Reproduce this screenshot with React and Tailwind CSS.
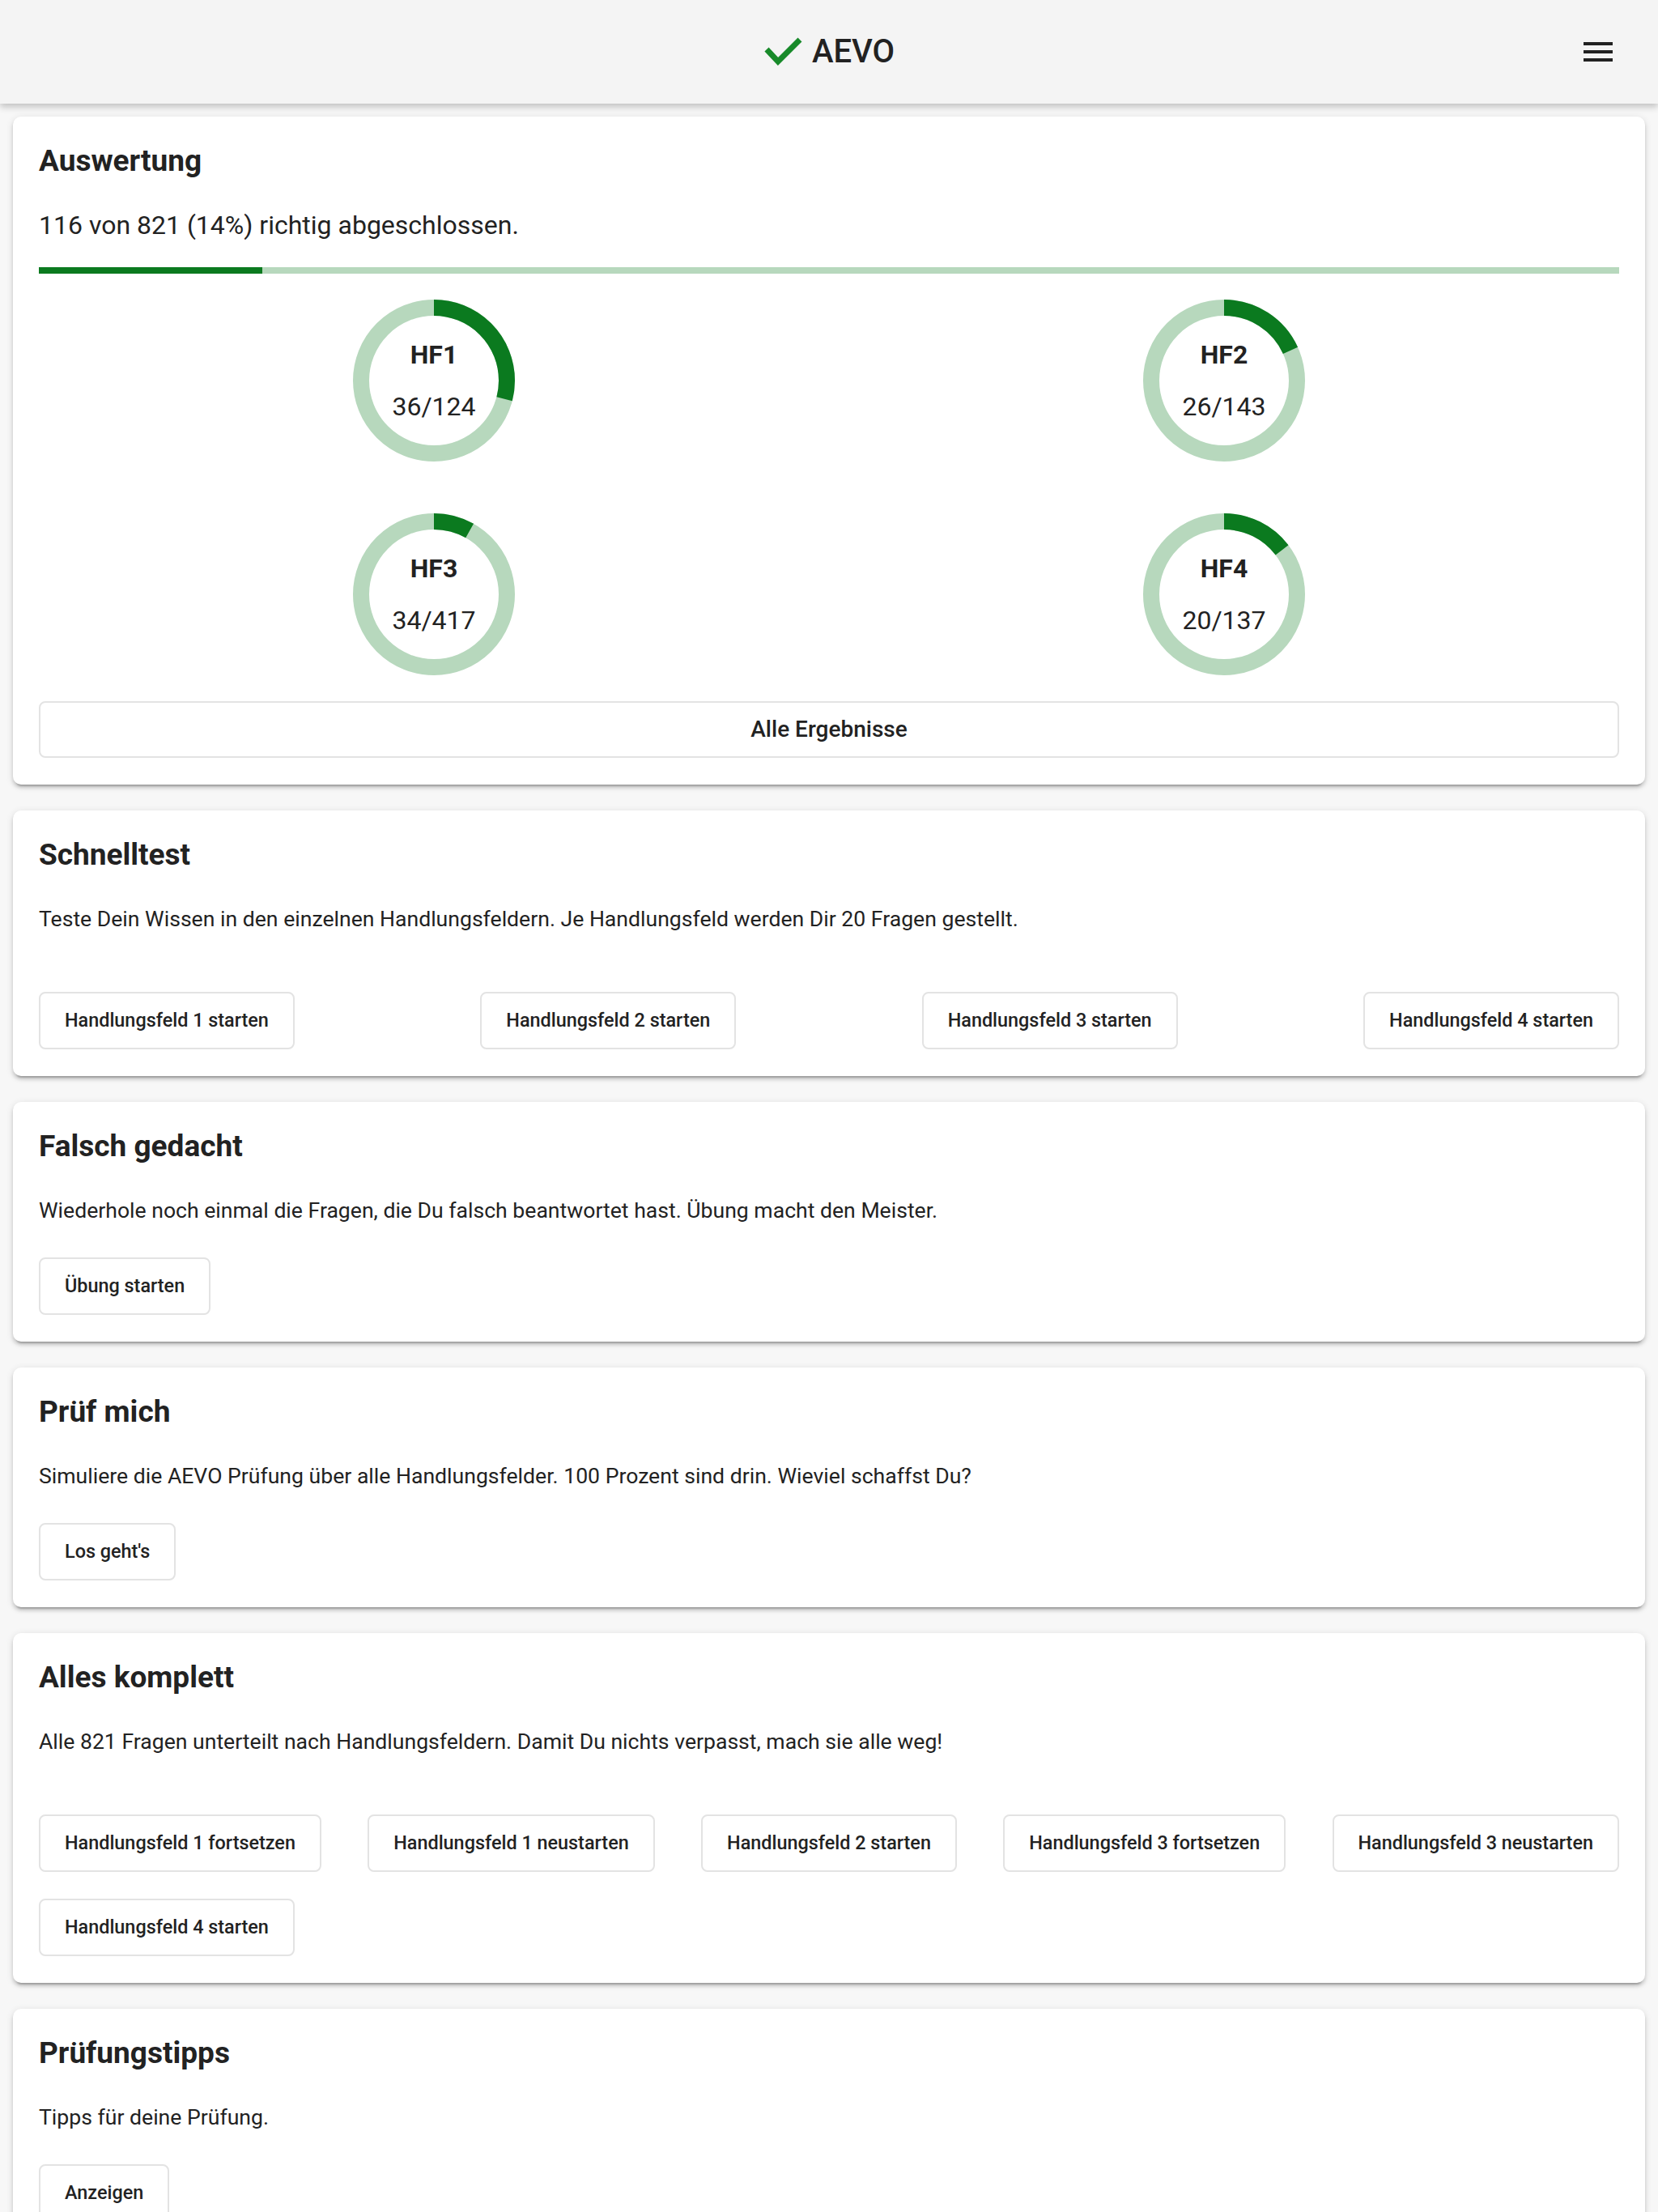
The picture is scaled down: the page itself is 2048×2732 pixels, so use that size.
import React from "react";

const fields = [
  { name: "HF1", done: 36, total: 124 },
  { name: "HF2", done: 26, total: 143 },
  { name: "HF3", done: 34, total: 417 },
  { name: "HF4", done: 20, total: 137 },
];

const cardCls =
  "mx-4 rounded-[10px] bg-white px-8 pt-8 pb-[33px] shadow-[0_4px_4px_rgba(0,0,0,0.14),0_6px_2px_-4px_rgba(0,0,0,0.2),0_2px_10px_rgba(0,0,0,0.12)]";

function Btn({ children }) {
  return (
    <button className="h-[71px] rounded-lg border-2 border-[#e3e3e3] bg-white px-[30px] text-[23.4px] font-medium text-[#222]">
      {children}
    </button>
  );
}

function Donut({ name, done, total }) {
  const r = 90;
  const c = 2 * Math.PI * r;
  const len = (done / total) * c;
  return (
    <div className="flex justify-center py-8">
      <div className="relative h-[200px] w-[200px]">
        <svg width="200" height="200" viewBox="0 0 200 200" className="absolute inset-0 -rotate-90">
          <circle cx="100" cy="100" r={r} fill="none" stroke="#b7d8bd" strokeWidth="20" />
          <circle cx="100" cy="100" r={r} fill="none" stroke="#0b7a1f" strokeWidth="20" strokeDasharray={`${len} ${c}`} />
        </svg>
        <div className="absolute inset-0 flex flex-col items-center justify-center text-[32px] leading-[64px] text-[#222]">
          <span className="font-bold">{name}</span>
          <span>{done}/{total}</span>
        </div>
      </div>
    </div>
  );
}

function Card({ title, text, children, wrap }) {
  return (
    <section className={cardCls}>
      <h2 className="text-[37px] font-bold leading-[46px] text-[#222]">{title}</h2>
      <p className="mt-9 text-[26.6px] leading-[40px] text-[#222]">{text}</p>
      {wrap ? (
        <div className="mt-[70px] flex flex-wrap justify-between gap-y-[33px]">{children}</div>
      ) : (
        <div className="mt-[38px] flex">{children}</div>
      )}
    </section>
  );
}

export default function App() {
  return (
    <div className="min-h-screen bg-[#f7f7f7] font-['Roboto',sans-serif]">
      <header className="relative z-10 grid h-[128px] grid-cols-[1fr_auto_1fr] items-center bg-[#f4f4f4] shadow-[0_4px_8px_rgba(0,0,0,0.22)]">
        <div />
        <div className="flex items-center">
          <svg width="50" height="36" viewBox="0 0 50 36">
            <polyline points="4,15 18,30 45,3" fill="none" stroke="#188a2a" strokeWidth="7" />
          </svg>
          <span className="ml-[10px] text-[40px] font-medium text-[#222]">AEVO</span>
        </div>
        <div className="flex justify-end pr-[50px]">
          <svg width="48" height="48" viewBox="0 0 24 24">
            <path fill="#222" d="M3 18h18v-2H3v2zm0-5h18v-2H3v2zm0-7v2h18V6H3z" />
          </svg>
        </div>
      </header>

      <main className="flex flex-col gap-8 pt-4 pb-8">
        <section className={cardCls}>
          <h2 className="text-[37px] font-bold leading-[46px] text-[#222]">Auswertung</h2>
          <p className="mt-9 text-[32px] leading-[40px] text-[#222]">116 von 821 (14%) richtig abgeschlossen.</p>
          <div className="mt-8 h-2 w-full bg-[#b7d8bd]">
            <div className="h-2 bg-[#0b7a1f]" style={{ width: `${(116 / 821) * 100}%` }} />
          </div>
          <div className="grid grid-cols-2">
            {fields.map((f) => (
              <Donut key={f.name} {...f} />
            ))}
          </div>
          <button className="h-[70px] w-full rounded-lg border-2 border-[#e3e3e3] bg-white text-[28px] font-medium text-[#222]">
            Alle Ergebnisse
          </button>
        </section>

        <Card
          wrap
          title="Schnelltest"
          text="Teste Dein Wissen in den einzelnen Handlungsfeldern. Je Handlungsfeld werden Dir 20 Fragen gestellt."
        >
          <Btn>Handlungsfeld 1 starten</Btn>
          <Btn>Handlungsfeld 2 starten</Btn>
          <Btn>Handlungsfeld 3 starten</Btn>
          <Btn>Handlungsfeld 4 starten</Btn>
        </Card>

        <Card
          title="Falsch gedacht"
          text="Wiederhole noch einmal die Fragen, die Du falsch beantwortet hast. Übung macht den Meister."
        >
          <Btn>Übung starten</Btn>
        </Card>

        <Card
          title="Prüf mich"
          text="Simuliere die AEVO Prüfung über alle Handlungsfelder. 100 Prozent sind drin. Wieviel schaffst Du?"
        >
          <Btn>Los geht's</Btn>
        </Card>

        <Card
          wrap
          title="Alles komplett"
          text="Alle 821 Fragen unterteilt nach Handlungsfeldern. Damit Du nichts verpasst, mach sie alle weg!"
        >
          <Btn>Handlungsfeld 1 fortsetzen</Btn>
          <Btn>Handlungsfeld 1 neustarten</Btn>
          <Btn>Handlungsfeld 2 starten</Btn>
          <Btn>Handlungsfeld 3 fortsetzen</Btn>
          <Btn>Handlungsfeld 3 neustarten</Btn>
          <Btn>Handlungsfeld 4 starten</Btn>
        </Card>

        <Card title="Prüfungstipps" text="Tipps für deine Prüfung.">
          <Btn>Anzeigen</Btn>
        </Card>
      </main>
    </div>
  );
}
